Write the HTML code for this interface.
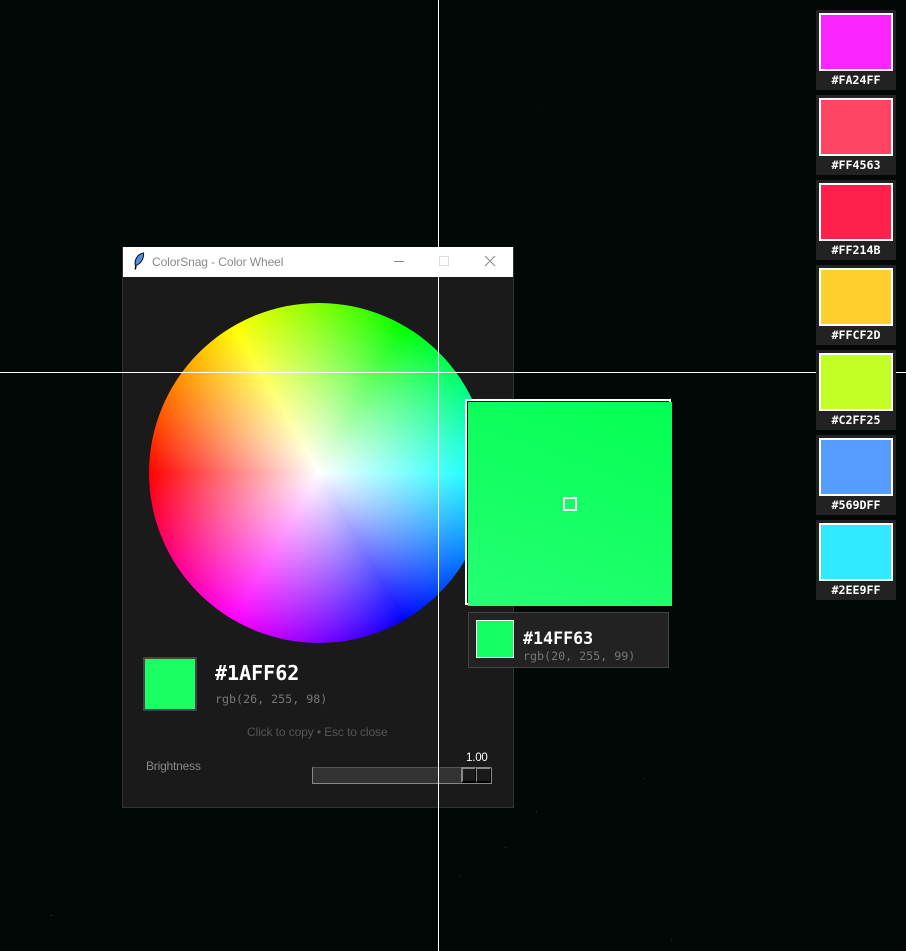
<!DOCTYPE html>
<html>
<head>
<meta charset="utf-8">
<title>ColorSnag - Color Wheel</title>
<style>
html,body{margin:0;padding:0;width:906px;height:951px;overflow:hidden;background:#010805;}
.a{position:absolute;box-sizing:border-box;}
.t{position:absolute;white-space:nowrap;line-height:1;}
.sans{font-family:"Liberation Sans",sans-serif;}
.mono{font-family:"DejaVu Sans Mono","Liberation Mono",monospace;}
.sw{position:absolute;left:816px;width:80px;height:80px;background:#222;}
.sw i{position:absolute;left:3px;top:3px;width:74px;height:58px;border:2px solid #fff;box-sizing:border-box;display:block;}
.sw span{position:absolute;left:0;width:80px;top:64px;text-align:center;color:#fff;font:bold 11.67px/12px "DejaVu Sans Mono","Liberation Mono",monospace;}
.d{position:absolute;width:1px;height:1px;}
</style>
</head>
<body>
<div class="d" style="left:538px;top:108px;background:#123"></div>
<div class="d" style="left:644px;top:778px;background:#133"></div>
<div class="d" style="left:536px;top:811px;background:#143"></div>
<div class="d" style="left:505px;top:847px;background:#143"></div>
<div class="d" style="left:459px;top:875px;background:#133"></div>
<div class="d" style="left:51px;top:915px;background:#252"></div>
<div class="d" style="left:671px;top:939px;background:#133"></div>

<!-- window -->
<div class="a" style="left:122px;top:247px;width:392px;height:561px;background:#1a1a1a;border:1px solid #333;border-top:0;"></div>

<!-- wheel -->
<div class="a" style="left:148.5px;top:302.5px;width:340px;height:340px;border-radius:50%;background:radial-gradient(circle closest-side,#fff 0,rgba(255,255,255,0) 100%),conic-gradient(from 270deg,#f00,#ff0,#0f0,#0ff,#00f,#f0f,#f00);"></div>

<!-- preview -->
<div class="a" style="left:143px;top:657px;width:54px;height:54px;background:#1aff62;border:2px solid #444;"></div>
<div class="t mono" style="left:215px;top:662px;font-size:20px;font-weight:bold;color:#fff;line-height:22px;">#1AFF62</div>
<div class="t mono" style="left:215px;top:692px;font-size:11.67px;color:#777;line-height:14px;">rgb(26, 255, 98)</div>
<div class="t sans" style="left:247px;top:725px;font-size:12px;color:#555;line-height:14px;letter-spacing:-.11px;">Click to copy • Esc to close</div>
<div class="t sans" style="left:146px;top:759px;font-size:12px;color:#888;line-height:14px;letter-spacing:-.2px;">Brightness</div>
<div class="t sans" style="left:466px;top:751px;font-size:11.5px;color:#fff;line-height:14px;letter-spacing:-.2px;">1.00</div>

<!-- slider -->
<div class="a" style="left:312px;top:767px;width:180px;height:17px;background:#333;border:1px solid #888;border-top-color:#555;"></div>
<div class="a" style="left:461px;top:767px;width:15px;height:16px;background:#1a1a1a;border-top:2px solid #888;border-left:2px solid #888;border-bottom:2px solid #000;border-right:1px solid #000;"></div>
<div class="a" style="left:476px;top:767px;width:15px;height:16px;background:#1a1a1a;border-top:2px solid #888;border-left:1px solid #888;border-bottom:2px solid #000;border-right:1px solid #000;"></div>

<!-- crosshair -->
<div class="a" style="left:438px;top:0;width:1px;height:951px;background:#fff;"></div>
<div class="a" style="left:0;top:372px;width:906px;height:1px;background:#fff;"></div>

<!-- title bar -->
<div class="a" style="left:123px;top:247px;width:390px;height:30px;background:#fff;"></div>
<svg class="a" style="left:132px;top:251px" width="14" height="20" viewBox="0 0 14 20">
<path d="M3.3 18.5 L4.2 13" stroke="#000" stroke-width="1.5" fill="none"/>
<path d="M3.5 14.5 C2 10 5 3 11.5 2 C12 7.5 9 13 3.5 14.5 Z" fill="#4f8fe0" stroke="#0c1a30" stroke-width="1.1"/>
</svg>
<div class="t sans" style="left:152px;top:255px;font-size:12px;color:#888;line-height:14px;letter-spacing:-.09px;">ColorSnag - Color Wheel</div>
<div class="a" style="left:394px;top:261px;width:10px;height:1px;background:#888;"></div>
<div class="a" style="left:439px;top:256px;width:10px;height:10px;border:1px solid #ddd;"></div>
<svg class="a" style="left:484px;top:255px" width="12" height="12" viewBox="0 0 12 12"><path d="M1 1 L11 11 M11 1 L1 11" stroke="#888" stroke-width="1" fill="none"/></svg>

<!-- magnifier -->
<div class="a" style="left:465px;top:399px;width:206px;height:206px;background:#1a1a1a;border:2px solid #fff;"></div>
<div class="a" style="left:468px;top:402px;width:204px;height:204px;background:linear-gradient(200deg,#04ff52 0%,#14ff63 50%,#24ff74 100%);"></div>
<div class="a" style="left:563px;top:497px;width:14px;height:14px;border:2px solid #fff;"></div>

<!-- info panel -->
<div class="a" style="left:468px;top:612px;width:201px;height:56px;background:#222;border:1px solid #444;"></div>
<div class="a" style="left:476px;top:620px;width:38px;height:38px;background:#14ff63;border:1px solid #fff;"></div>
<div class="t mono" style="left:523px;top:630px;font-size:16.67px;font-weight:bold;color:#fff;line-height:18px;">#14FF63</div>
<div class="t mono" style="left:523px;top:649px;font-size:11.67px;color:#777;line-height:14px;">rgb(20, 255, 99)</div>

<!-- swatches -->
<div class="sw" style="top:10px"><i style="background:#fa24ff"></i><span>#FA24FF</span></div>
<div class="sw" style="top:95px"><i style="background:#ff4563"></i><span>#FF4563</span></div>
<div class="sw" style="top:180px"><i style="background:#ff214b"></i><span>#FF214B</span></div>
<div class="sw" style="top:265px"><i style="background:#ffcf2d"></i><span>#FFCF2D</span></div>
<div class="sw" style="top:350px"><i style="background:#c2ff25"></i><span>#C2FF25</span></div>
<div class="sw" style="top:435px"><i style="background:#569dff"></i><span>#569DFF</span></div>
<div class="sw" style="top:520px"><i style="background:#2ee9ff"></i><span>#2EE9FF</span></div>
</body>
</html>
